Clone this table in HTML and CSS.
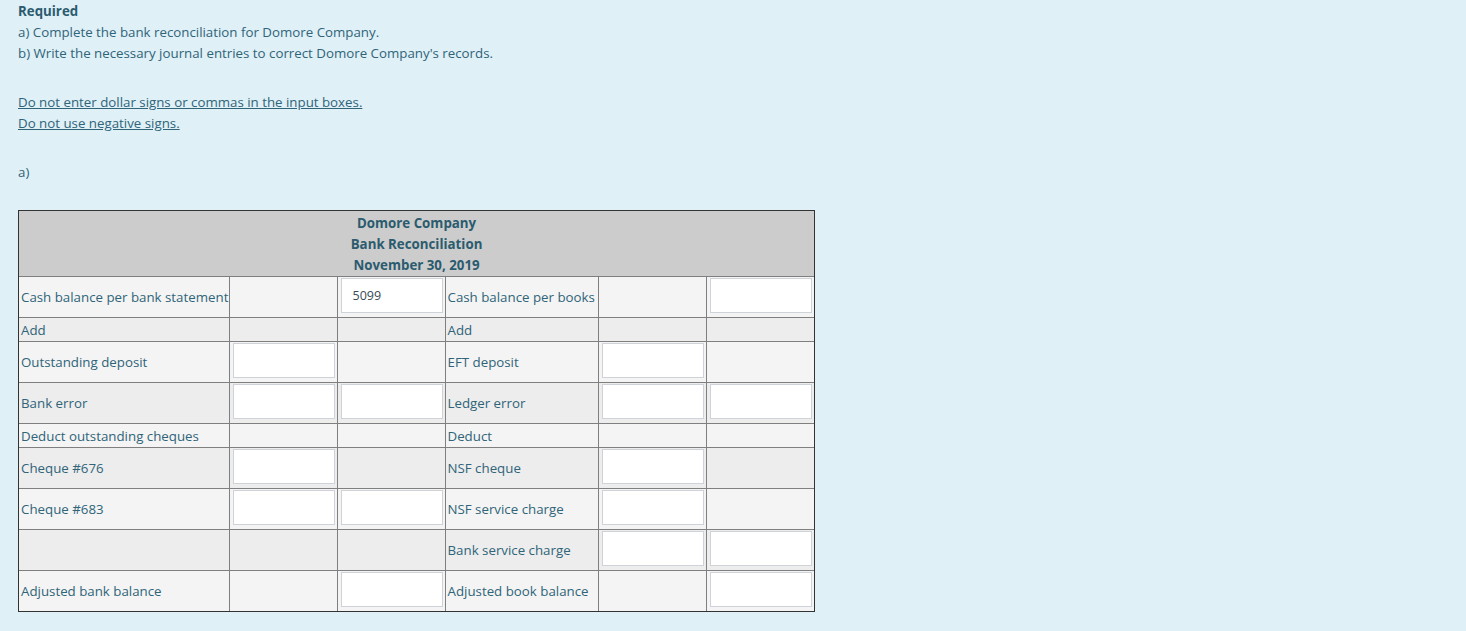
FILE: index.html
```html
<!DOCTYPE html>
<html>
<head>
<meta charset="utf-8">
<link rel="stylesheet" href="styles.css">
</head>
<body>
<div class="page">
  <div class="intro">
    <div class="line bold">Required</div>
    <div class="line">a) Complete the bank reconciliation for Domore Company.</div>
    <div class="line">b) Write the necessary journal entries to correct Domore Company's records.</div>
  </div>
  <div class="notes">
    <div class="line"><span class="ul">Do not enter dollar signs or commas in the input boxes.</span></div>
    <div class="line"><span class="ul">Do not use negative signs.</span></div>
  </div>
  <div class="part">
    <div class="line">a)</div>
  </div>
  <div class="tablewrap">
    <table class="recon">
      <colgroup>
        <col class="c-label1"><col class="c-num"><col class="c-num"><col class="c-label2"><col class="c-num"><col class="c-num-last">
      </colgroup>
      <tr class="head">
        <td colspan="6">Domore Company<br>Bank Reconciliation<br>November 30, 2019</td>
      </tr>
      <tr class="tall light">
        <td class="lbl">Cash balance per bank statement</td>
        <td></td>
        <td class="inp"><div class="box">5099</div></td>
        <td class="lbl">Cash balance per books</td>
        <td></td>
        <td class="inp"><div class="box"></div></td>
      </tr>
      <tr class="short dark">
        <td class="lbl">Add</td><td></td><td></td><td class="lbl">Add</td><td></td><td></td>
      </tr>
      <tr class="tall light">
        <td class="lbl">Outstanding deposit</td>
        <td class="inp"><div class="box"></div></td>
        <td></td>
        <td class="lbl">EFT deposit</td>
        <td class="inp"><div class="box"></div></td>
        <td></td>
      </tr>
      <tr class="tall dark">
        <td class="lbl">Bank error</td>
        <td class="inp"><div class="box"></div></td>
        <td class="inp"><div class="box"></div></td>
        <td class="lbl">Ledger error</td>
        <td class="inp"><div class="box"></div></td>
        <td class="inp"><div class="box"></div></td>
      </tr>
      <tr class="short light">
        <td class="lbl">Deduct outstanding cheques</td><td></td><td></td><td class="lbl">Deduct</td><td></td><td></td>
      </tr>
      <tr class="tall dark">
        <td class="lbl">Cheque #676</td>
        <td class="inp"><div class="box"></div></td>
        <td></td>
        <td class="lbl">NSF cheque</td>
        <td class="inp"><div class="box"></div></td>
        <td></td>
      </tr>
      <tr class="tall light">
        <td class="lbl">Cheque #683</td>
        <td class="inp"><div class="box"></div></td>
        <td class="inp"><div class="box"></div></td>
        <td class="lbl">NSF service charge</td>
        <td class="inp"><div class="box"></div></td>
        <td></td>
      </tr>
      <tr class="tall dark">
        <td class="lbl"></td>
        <td></td>
        <td></td>
        <td class="lbl">Bank service charge</td>
        <td class="inp"><div class="box"></div></td>
        <td class="inp"><div class="box"></div></td>
      </tr>
      <tr class="tall light">
        <td class="lbl">Adjusted bank balance</td>
        <td></td>
        <td class="inp"><div class="box"></div></td>
        <td class="lbl">Adjusted book balance</td>
        <td></td>
        <td class="inp"><div class="box"></div></td>
      </tr>
    </table>
  </div>
</div>
</body>
</html>
```

FILE: styles.css
```css
html, body {
  margin: 0;
  padding: 0;
  background: #dff0f7;
}
body {
  font-family: "Open Sans", "Liberation Sans", sans-serif;
  font-size: 13.3px;
  color: #2f6479;
}
.page {
  padding: 1px 18px 0 18px;
}
.line {
  height: 21px;
  line-height: 21px;
  white-space: nowrap;
}
.bold {
  font-weight: bold;
  color: #2b5b6e;
}
.notes {
  margin-top: 28px;
}
.ul {
  text-decoration: underline;
}
.part {
  margin-top: 28px;
}
.tablewrap {
  margin-top: 27px;
  width: 795px;
  border: 1px solid #333;
}
.recon {
  border-collapse: collapse;
  border-style: hidden;
  table-layout: fixed;
  width: 795px;
}
.c-label1 { width: 210px; }
.c-num { width: 108px; }
.c-label2 { width: 153px; }
.c-num-last { width: 108px; }
.recon td {
  border: 1px solid #7f7f7f;
  padding: 0;
  vertical-align: middle;
}
.head td {
  background: #cccccc;
  text-align: center;
  font-weight: bold;
  color: #2b5b6e;
  line-height: 21px;
  height: 63px;
  padding: 2px 0 0 0;
}
.tall td { height: 40px; }
.short td { height: 23px; }
.light td { background: #f4f4f4; }
.dark td { background: #ededed; }
.recon td.lbl {
  padding-left: 2px;
  white-space: nowrap;
  overflow: hidden;
}
.recon td.inp {
  padding: 0 0 0 3px;
}
.box {
  box-sizing: border-box;
  width: 102px;
  height: 35px;
  margin: 0 0 4px 0;
  background: #fff;
  border: 1px solid #cdd3d8;
  padding-left: 11px;
  line-height: 33px;
  font-size: 12.5px;
  color: #3a4a55;
}
```
